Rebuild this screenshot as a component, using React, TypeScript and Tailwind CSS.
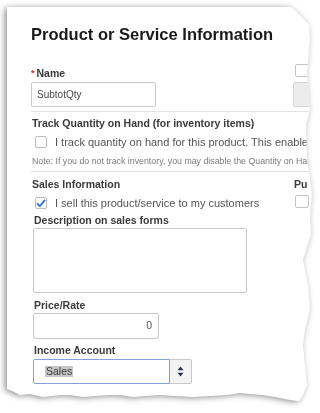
import React from 'react'

const sans = { fontFamily: '"Liberation Sans", Arial, sans-serif' }

function Box({ checked = false }: { checked?: boolean }) {
  return (
    <div className="w-[12px] h-[12px] shrink-0 rounded-[2px] border border-[#bdbdbd] bg-white flex items-center justify-center">
      {checked && (
        <svg width="10" height="9" viewBox="0 0 10 9">
          <path d="M1.5 4.8 L3.8 7.2 L8.6 1.4" fill="none" stroke="#2f6fd6" strokeWidth="1.8" strokeLinecap="round" strokeLinejoin="round" />
        </svg>
      )}
    </div>
  )
}

function Label({ children }: { children: React.ReactNode }) {
  return <div className="text-[10.5px] leading-[14px] font-bold text-[#3a3a3a] whitespace-nowrap ml-[1px]">{children}</div>
}

export default function App() {
  return (
    <div className="w-[320px] h-[413px] bg-white overflow-hidden pt-[7px] pl-[7px]" style={sans}>
      {/* torn paper sheet */}
      <div className="[filter:drop-shadow(-2px_1px_3px_rgba(0,0,0,0.45))]">
        <div className="w-[313px] h-[400px] bg-white overflow-hidden [clip-path:polygon(0px_0px,284px_0px,290px_5px,296px_11px,302px_18px,303px_33px,300px_66px,302px_93px,303px_103px,299px_118px,300px_150px,302px_163px,305px_188px,303px_209px,304px_228px,296px_253px,301px_278px,303px_303px,298px_323px,296px_338px,298px_358px,300px_378px,296px_388px,292px_394px,283px_393px,268px_390px,256px_388px,243px_387px,233px_386px,220px_388px,203px_389px,186px_390px,168px_389px,153px_388px,138px_389px,126px_390px,113px_388px,103px_388px,88px_389px,76px_390px,63px_388px,53px_388px,36px_390px,23px_387px,13px_388px,5px_384px,0px_382px)]">
          <div className="pl-[24px] pt-[16px] w-[340px]">
            <h1 className="text-[16.5px] leading-[22px] font-bold text-[#1a1a1a] whitespace-nowrap">
              Product or Service Information
            </h1>

            {/* Name row */}
            <div className="flex mt-[21px]">
              <div className="w-[262px] shrink-0">
                <div className="text-[10.5px] leading-[14px] font-bold text-[#3a3a3a]">
                  <span className="text-[#d52b1e] mr-[2px] text-[9px] align-top">*</span>Name
                </div>
                <div className="mt-[2px] w-[125px] h-[25px] rounded-[2px] border border-[#c9c9c9] flex items-center pl-[5px] text-[10px] text-[#4a4a4a]">
                  SubtotQty
                </div>
              </div>
              <div className="-mt-[2px] shrink-0">
                <div className="ml-[2px] w-[14px] h-[13px] rounded-[2px] border border-[#c4c4c4] bg-white" />
                <div className="mt-[5px] w-[40px] h-[25px] rounded-[2px] border border-[#d6d6d6] bg-[#ececec]" />
              </div>
            </div>

            <div className="mt-[4px] h-px bg-[#e3e3e3]" />

            {/* Inventory */}
            <div className="mt-[4px]">
              <Label>Track Quantity on Hand (for inventory items)</Label>
              <div className="mt-[6px] flex items-center gap-[8px] ml-[4px]">
                <Box />
                <span className="text-[11px] leading-[12px] text-[#555] whitespace-nowrap">
                  I track quantity on hand for this product. This enables
                </span>
              </div>
              <div className="mt-[7px] ml-[1px] text-[8.8px] leading-[12px] text-[#7a7a7a] whitespace-nowrap">
                Note: If you do not track inventory, you may disable the Quantity on Hand
              </div>
            </div>

            <div className="mt-[4px] h-px bg-[#e3e3e3]" />

            {/* Sales */}
            <div className="flex mt-[5px]">
              <div className="w-[262px] shrink-0">
                <Label>Sales Information</Label>
                <div className="mt-[6px] flex items-center gap-[8px] ml-[4px]">
                  <Box checked />
                  <span className="text-[11px] leading-[12px] text-[#555] whitespace-nowrap">
                    I sell this product/service to my customers
                  </span>
                </div>
              </div>
              <div className="shrink-0">
                <Label>Pu</Label>
                <div className="mt-[4px] ml-[2px] w-[14px] h-[13px] rounded-[2px] border border-[#c4c4c4] bg-white" />
              </div>
            </div>

            <div className="mt-[4px] ml-[2px]">
              <Label>Description on sales forms</Label>
              <div className="mt-[1px] w-[214px] h-[65px] rounded-[2px] border border-[#c9c9c9] bg-white" />

              <div className="mt-[5px]">
                <Label>Price/Rate</Label>
              </div>
              <div className="mt-[1px] w-[126px] h-[26px] rounded-[2px] border border-[#c9c9c9] flex items-center justify-end pr-[6px] text-[10.5px] text-[#555]">
                0
              </div>

              <div className="mt-[4px]">
                <Label>Income Account</Label>
              </div>
              <div className="mt-[2px] flex h-[25px]">
                <div className="w-[137px] h-full rounded-l-[2px] border border-[#7fa2de] flex items-center pl-[11px]">
                  <span className="bg-[#c6c6c6] text-[10.5px] leading-[11px] text-[#3a3a3a] px-[1px]">Sales</span>
                </div>
                <div className="w-[22px] h-full border border-l-0 border-[#c9c9c9] rounded-r-[2px] bg-[#f3f3f3] flex items-center justify-center">
                  <svg width="7" height="11" viewBox="0 0 7 11">
                    <path d="M3.5 0.5 L6.5 4.3 H0.5 Z" fill="#243352" />
                    <path d="M3.5 10.5 L6.5 6.7 H0.5 Z" fill="#243352" />
                  </svg>
                </div>
              </div>
            </div>
          </div>
        </div>
      </div>
    </div>
  )
}
